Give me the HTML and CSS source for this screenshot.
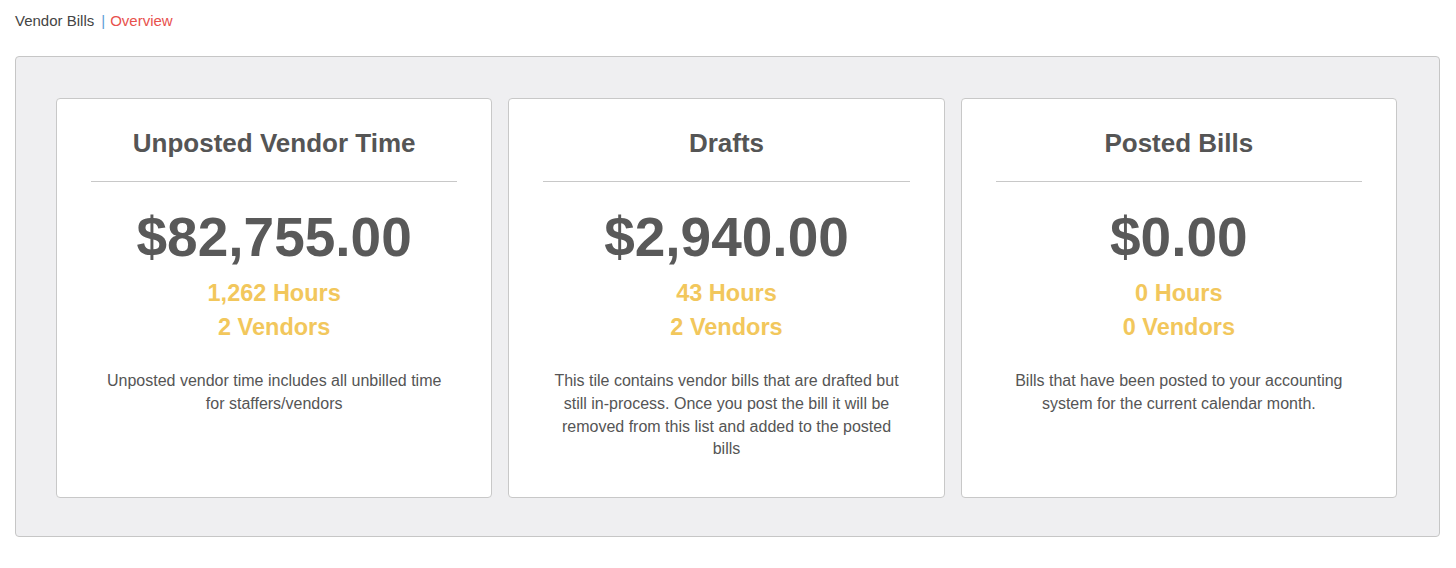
FILE: index.html
```html
<!DOCTYPE html>
<html lang="en">
<head>
<meta charset="utf-8">
<title>Vendor Bills - Overview</title>
<link rel="stylesheet" href="styles.css">
</head>
<body>
<div class="page">
  <div class="breadcrumb">
    <span class="crumb">Vendor Bills</span><span class="sep">|</span><span class="crumb-active">Overview</span>
  </div>
  <div class="panel">
    <div class="tiles">
      <div class="tile">
        <h2 class="tile-title">Unposted Vendor Time</h2>
        <hr class="tile-rule">
        <div class="tile-amount">$82,755.00</div>
        <div class="tile-stat tile-stat-first">1,262 Hours</div>
        <div class="tile-stat">2 Vendors</div>
        <p class="tile-desc">Unposted vendor time includes all unbilled time for staffers/vendors</p>
      </div>
      <div class="tile">
        <h2 class="tile-title">Drafts</h2>
        <hr class="tile-rule">
        <div class="tile-amount">$2,940.00</div>
        <div class="tile-stat tile-stat-first">43 Hours</div>
        <div class="tile-stat">2 Vendors</div>
        <p class="tile-desc">This tile contains vendor bills that are drafted but still in-process. Once you post the bill it will be removed from this list and added to the posted bills</p>
      </div>
      <div class="tile">
        <h2 class="tile-title">Posted Bills</h2>
        <hr class="tile-rule">
        <div class="tile-amount">$0.00</div>
        <div class="tile-stat tile-stat-first">0 Hours</div>
        <div class="tile-stat">0 Vendors</div>
        <p class="tile-desc">Bills that have been posted to your accounting system for the current calendar month.</p>
      </div>
    </div>
  </div>
</div>
</body>
</html>
```
FILE: styles.css
```css
html, body {
  margin: 0;
  padding: 0;
  background: #ffffff;
  font-family: "Liberation Sans", Arial, sans-serif;
  color: #555555;
}

.page {
  padding: 11px 16px 0 15px;
}

.breadcrumb {
  font-size: 15px;
  line-height: 20px;
  color: #444444;
}

.sep {
  color: #5b9bd5;
  margin: 0 5px 0 7px;
}

.crumb-active {
  color: #e8514d;
}

.panel {
  margin-top: 25px;
  background: #efeff1;
  border: 1px solid #c6c6c6;
  border-radius: 4px;
  padding: 41px 42px 38px 40px;
}

.tiles {
  display: grid;
  grid-template-columns: repeat(3, 1fr);
  gap: 16px;
}

.tile {
  box-sizing: border-box;
  height: 400px;
  background: #ffffff;
  border: 1px solid #c8c8c8;
  border-radius: 4px;
  padding: 30px 34px;
  text-align: center;
}

.tile-title {
  margin: 0;
  font-size: 26px;
  line-height: 28px;
  font-weight: 700;
  color: #555555;
}

.tile-rule {
  margin: 24px 0 0;
  border: 0;
  border-top: 1px solid #c8c8c8;
  height: 0;
}

.tile-amount {
  margin-top: 24px;
  font-size: 55px;
  line-height: 62px;
  font-weight: 700;
  color: #595959;
}

.tile-stat {
  font-size: 23.5px;
  line-height: 34px;
  font-weight: 700;
  color: #f2c75c;
}

.tile-stat-first {
  margin-top: 8px;
}

.tile-desc {
  margin: 26px 0 0;
  padding: 0 6px;
  font-size: 16px;
  line-height: 22.8px;
  color: #555555;
}
```
